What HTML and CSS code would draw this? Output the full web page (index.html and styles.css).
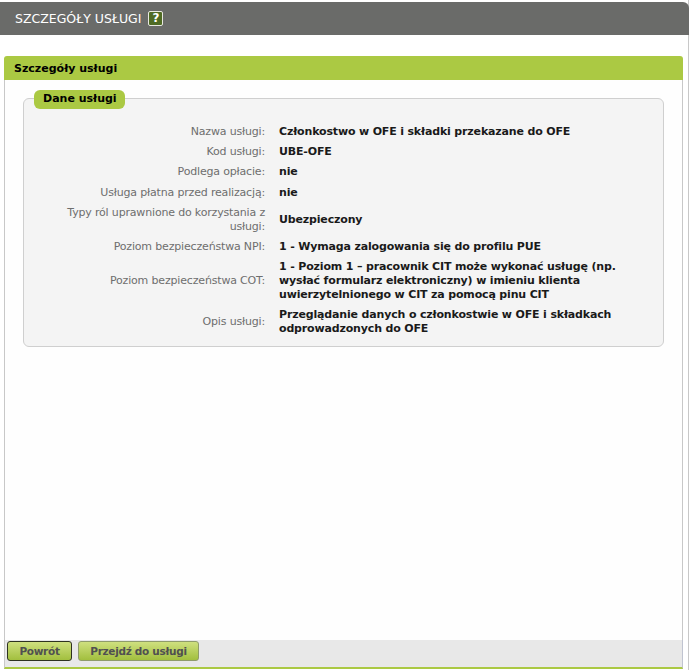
FILE: index.html
```html
<!DOCTYPE html>
<html lang="pl">
<head>
<meta charset="utf-8">
<title>Szczegóły usługi</title>
<link rel="stylesheet" href="styles.css">
</head>
<body>
<div class="page">
  <header class="topbar">
    <span class="topbar-title">SZCZEGÓŁY USŁUGI</span>
    <span class="help">?</span>
  </header>
  <main class="panel">
    <h2 class="panel-head">Szczegóły usługi</h2>
    <div class="panel-body">
      <section class="group">
        <h3 class="group-title">Dane usługi</h3>
        <dl class="rows">
          <dt>Nazwa usługi:</dt><dd>Członkostwo w OFE i składki przekazane do OFE</dd>
          <dt>Kod usługi:</dt><dd>UBE-OFE</dd>
          <dt>Podlega opłacie:</dt><dd>nie</dd>
          <dt>Usługa płatna przed realizacją:</dt><dd>nie</dd>
          <dt>Typy ról uprawnione do korzystania z usługi:</dt><dd>Ubezpieczony</dd>
          <dt>Poziom bezpieczeństwa NPI:</dt><dd>1 - Wymaga zalogowania się do profilu PUE</dd>
          <dt>Poziom bezpieczeństwa COT:</dt><dd>1 - Poziom 1 – pracownik CIT może wykonać usługę (np. wysłać formularz elektroniczny) w imieniu klienta uwierzytelnionego w CIT za pomocą pinu CIT</dd>
          <dt>Opis usługi:</dt><dd>Przeglądanie danych o członkostwie w OFE i składkach odprowadzonych do OFE</dd>
        </dl>
      </section>
    </div>
    <footer class="actions">
      <button class="btn btn-focus" type="button">Powrót</button>
      <button class="btn" type="button">Przejdź do usługi</button>
    </footer>
  </main>
</div>
</body>
</html>
```
FILE: styles.css
```css
html, body { margin: 0; padding: 0; background: #fff; }
body { font-family: "DejaVu Sans", Verdana, sans-serif; font-size: 11px; color: #000; }
.page { width: 689px; height: 670px; box-sizing: border-box; padding-top: 2px; border-right: 1px solid #c8c8c8; display: flex; flex-direction: column; }
.topbar { height: 33px; background: #6a6b69; border-top-right-radius: 6px; display: flex; align-items: center; gap: 7px; padding-left: 15px; color: #fff; font-size: 12.5px; margin-right: -1px; box-sizing: border-box; flex: none; }
.help { width: 15px; height: 15px; box-sizing: border-box; border: 1px solid #e8e8e0; background: #4f6b24; border-radius: 2px; color: #fff; font-weight: bold; font-size: 12px; line-height: 13px; text-align: center; }
.panel { margin: 21px 5px 1px 4px; flex: 1; display: flex; flex-direction: column; min-height: 0; }
.panel-head { margin: 0; height: 24px; line-height: 25px; padding-left: 10px; background: #abc943; border-top-right-radius: 3px; border-top-left-radius: 3px; font-size: 11px; font-weight: bold; box-sizing: border-box; flex: none; }
.panel-body { flex: 1; border-left: 1px solid #c8c8c8; border-right: 1px solid #c8c8c8; padding: 18px 18px 0; background: #fefefe; }
.group { height: 249px; box-sizing: border-box; border: 1px solid #cfcfcf; border-radius: 6px; background: #f4f4f4; padding: 0 0 0 1px; }
.group-title { display: inline-block; margin: -9px 0 0 9px; height: 19px; line-height: 18px; padding: 0 8px 0 9px; background: #abc943; border-radius: 6px; font-size: 11px; font-weight: bold; vertical-align: top; }
.rows { display: grid; grid-template-columns: 240px 1fr; column-gap: 14px; margin: 10px 20px 0 0; }
.rows dt, .rows dd { margin: 0; padding: 3.1px 0; line-height: 14px; display: flex; align-items: center; }
.rows dt { color: #6e6e6e; justify-content: flex-end; text-align: right; letter-spacing: -0.17px; padding-left: 30px; }
.rows dd { font-weight: bold; color: #1a1a1a; letter-spacing: -0.16px; }
.actions { flex: none; height: 29px; box-sizing: border-box; background: #e8e8e8; border-bottom: 2px solid #abc943; border-left: 1px solid #c8c8c8; border-right: 1px solid #c0c4d0; padding: 1px 0 0 2px; display: flex; gap: 6px; align-items: flex-start; }
.btn { height: 20px; width: 121px; padding: 0; border: 1px solid #8f9c6a; border-radius: 3px; background: linear-gradient(#cfe07f, #a2bf3e); font-family: inherit; font-size: 10.5px; font-weight: bold; letter-spacing: -0.3px; color: #505050; }
.btn-focus { border-color: #2e3320; width: 65px; }
```
